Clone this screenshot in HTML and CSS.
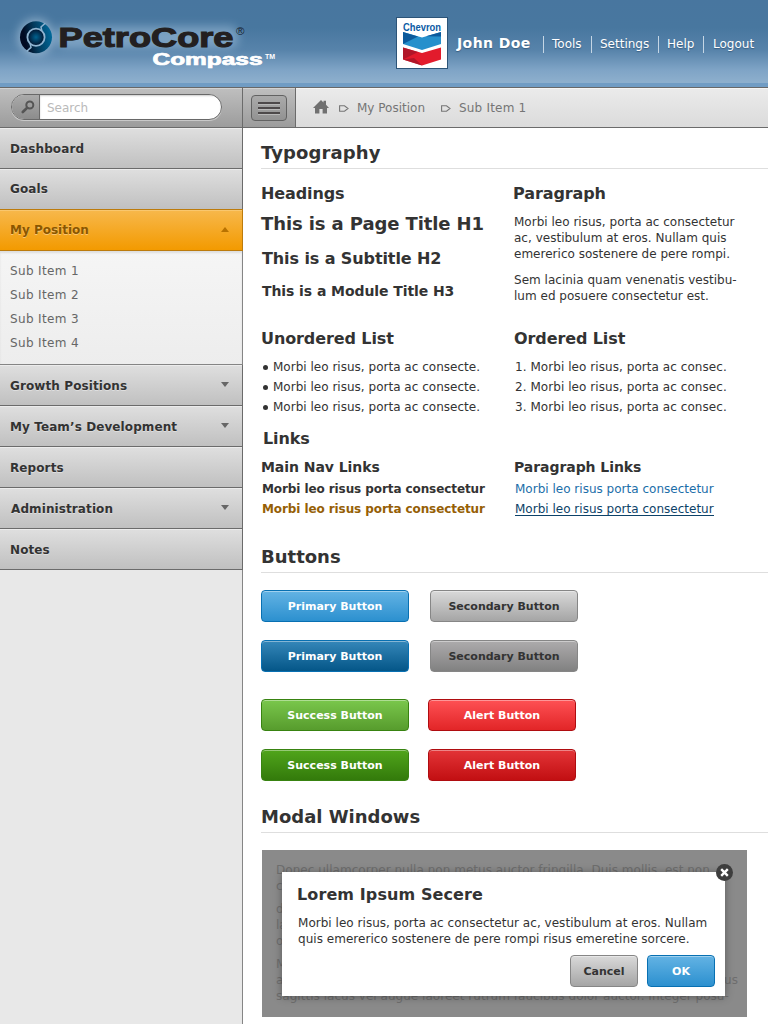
FILE: index.html
```
<!DOCTYPE html>
<html lang="en">
<head>
<meta charset="utf-8">
<title>PetroCore Compass</title>
<link rel="stylesheet" href="styles.css">
</head>
<body>
<header class="header">
  <svg class="logo" width="290" height="83" viewBox="0 0 290 83" role="img" aria-label="PetroCore Compass">
    <defs>
      <linearGradient id="ring" x1="0" x2="1" y1="0.6" y2="0.4"><stop offset="0.15" stop-color="#010a22"/><stop offset="0.5" stop-color="#033a5c"/><stop offset="1" stop-color="#006a9c"/></linearGradient>
      <radialGradient id="core"><stop offset="0" stop-color="#00628f"/><stop offset="1" stop-color="#02122c"/></radialGradient>
      <filter id="glow" x="-30%" y="-60%" width="160%" height="220%"><feGaussianBlur stdDeviation="5"/></filter>
    </defs>
    <g filter="url(#glow)" opacity="0.5">
      <circle cx="36" cy="37" r="18" fill="#cfe2f2"/>
      <rect x="56" y="26" width="182" height="22" rx="8" fill="#a9c6e0"/>
    </g>
    <circle cx="36" cy="37.2" r="16" fill="url(#ring)"/>
    <circle cx="36" cy="37.2" r="8.6" fill="url(#core)" stroke="#8fb4d1" stroke-width="1.8"/>
    <path d="M41.8 30.6L41 27L45.2 23.2M30.2 43.8L31 47.4L26.8 51.2" fill="none" stroke="#8fb4d1" stroke-width="1.5"/>
    <text x="58.5" y="47" class="logo-name" textLength="175" lengthAdjust="spacingAndGlyphs">PetroCore</text>
    <text x="236" y="35" class="logo-reg">®</text>
    <text x="152.5" y="65" class="logo-sub" textLength="110" lengthAdjust="spacingAndGlyphs">Compass</text>
    <text x="265" y="59" class="logo-tm">TM</text>
  </svg>
  <div class="account">
    <svg class="company" width="52" height="52" viewBox="0 0 52 52" role="img" aria-label="Chevron">
      <rect x="0.5" y="0.5" width="51" height="51" fill="#fff" stroke="#2c5478"/>
      <text x="7" y="13.6" class="company-name" textLength="38" lengthAdjust="spacingAndGlyphs">Chevron</text>
      <path d="M7 15L26 20.5L45 15V27L26 33L7 27Z" fill="#2590cc"/>
      <path d="M7 15L22 19.5L7 27ZM45 15V19.5L30 19.3Z" fill="#0c5a9c"/>
      <path d="M7 30.5L26 36L45 30.5V42.5L26 48.5L7 42.5Z" fill="#e21b2c"/>
      <path d="M7 30.5L22 35L7 42.5ZM7 42.5L18 41L26 48.5Z" fill="#a81528" opacity="0.85"/>
    </svg>
    <strong class="user">John Doe</strong>
    <nav class="links"><a>Tools</a><a>Settings</a><a>Help</a><a>Logout</a></nav>
  </div>
</header>
<div class="toolbar">
  <div class="search-area">
    <div class="search">
      <span class="search-button"><svg width="14" height="14" viewBox="0 0 14 14"><circle cx="8.8" cy="5" r="3.5" fill="none" stroke="#555" stroke-width="2"/><path d="M6.2 7.8L1.8 12" stroke="#555" stroke-width="2.6" stroke-linecap="round"/></svg></span>
      <span class="search-field">Search</span>
    </div>
  </div>
  <div class="toggle-area"><span class="toggle"><i></i><i></i><i></i></span></div>
  <nav class="crumbs">
    <svg class="home" width="16" height="14" viewBox="0 0 16 14"><path d="M8 0L10.5 2.4V0.8H13V4.8L16 8H14V13.5H9.6V9H6.4V13.5H2V8H0Z" fill="#707070"/></svg>
    <svg class="sep" width="10" height="7" viewBox="0 0 10 7"><path d="M0.6 0.8H5.5L9 3.5L5.5 6.2H0.6Z" fill="none" stroke="#757575" stroke-width="1.1"/></svg>
    <a class="crumb">My Position</a>
    <svg class="sep" width="10" height="7" viewBox="0 0 10 7"><path d="M0.6 0.8H5.5L9 3.5L5.5 6.2H0.6Z" fill="none" stroke="#757575" stroke-width="1.1"/></svg>
    <a class="crumb last">Sub Item 1</a>
  </nav>
</div>
<div class="body">
  <aside class="sidebar">
    <a class="item">Dashboard</a>
    <a class="item goals">Goals</a>
    <a class="item active">My Position<i class="arrow up"></i></a>
    <div class="subnav"><a>Sub Item 1</a><a>Sub Item 2</a><a>Sub Item 3</a><a>Sub Item 4</a></div>
    <a class="item">Growth Positions<i class="arrow"></i></a>
    <a class="item">My Team’s Development<i class="arrow"></i></a>
    <a class="item">Reports</a>
    <a class="item admin">Administration<i class="arrow"></i></a>
    <a class="item">Notes</a>
  </aside>
  <main class="content">
    <h2 class="section">Typography</h2>
    <div class="cols headings-row">
      <div>
        <h3 class="sub">Headings</h3>
        <h1 class="t1">This is a Page Title H1</h1>
        <h2 class="t2">This is a Subtitle H2</h2>
        <h3 class="t3">This is a Module Title H3</h3>
      </div>
      <div>
        <h3 class="sub para-title">Paragraph</h3>
        <p class="para">Morbi leo risus, porta ac consectetur<br>ac, vestibulum at eros. Nullam quis<br>emererico sostenere de pere rompi.</p>
        <p class="para">Sem lacinia quam venenatis vestibu-<br>lum ed posuere consectetur est.</p>
      </div>
    </div>
    <div class="cols lists-row">
      <div>
        <h3 class="sub">Unordered List</h3>
        <ul class="list"><li><b class="dot"></b>Morbi leo risus, porta ac consecte.</li><li><b class="dot"></b>Morbi leo risus, porta ac consecte.</li><li><b class="dot"></b>Morbi leo risus, porta ac consecte.</li></ul>
      </div>
      <div>
        <h3 class="sub">Ordered List</h3>
        <ul class="list numbers"><li>1. Morbi leo risus, porta ac consec.</li><li>2. Morbi leo risus, porta ac consec.</li><li>3. Morbi leo risus, porta ac consec.</li></ul>
      </div>
    </div>
    <h3 class="sub links-title">Links</h3>
    <div class="cols links-row">
      <div>
        <h4 class="minor">Main Nav Links</h4>
        <a class="nav-link">Morbi leo risus porta consectetur</a>
        <a class="nav-link hover">Morbi leo risus porta consectetur</a>
      </div>
      <div>
        <h4 class="minor">Paragraph Links</h4>
        <a class="text-link">Morbi leo risus porta consectetur</a>
        <a class="text-link hover">Morbi leo risus porta consectetur</a>
      </div>
    </div>
    <h2 class="section buttons-title">Buttons</h2>
    <div class="buttons">
      <div class="brow"><button class="btn primary">Primary Button</button><button class="btn secondary">Secondary Button</button></div>
      <div class="brow"><button class="btn primary pressed">Primary Button</button><button class="btn secondary pressed">Secondary Button</button></div>
      <div class="brow tight"><button class="btn success">Success Button</button><button class="btn alert">Alert Button</button></div>
      <div class="brow tight"><button class="btn success pressed">Success Button</button><button class="btn alert pressed">Alert Button</button></div>
    </div>
    <h2 class="section modal-title">Modal Windows</h2>
    <div class="stage">
      <div class="backdrop">
        <p>Donec ullamcorper nulla non metus auctor fringilla. Duis mollis, est non<br>c</p>
        <p>d<br>la<br>o</p>
        <p>M<br><span class="edge"><span>a</span><span>us</span></span>sagittis lacus vel augue laoreet rutrum faucibus dolor auctor. Integer posu-</p>
      </div>
      <div class="dialog">
        <svg class="close" width="17" height="17" viewBox="0 0 17 17"><circle cx="8.5" cy="8.5" r="8.5" fill="#3e3e3e"/><path d="M5.2 5.2L11.8 11.8M11.8 5.2L5.2 11.8" stroke="#fff" stroke-width="2.4"/></svg>
        <h3 class="dialog-title">Lorem Ipsum Secere</h3>
        <p class="dialog-text">Morbi leo risus, porta ac consectetur ac, vestibulum at eros. Nullam<br>quis emererico sostenere de pere rompi risus emeretine sorcere.</p>
        <div class="actions"><button class="btn secondary">Cancel</button><button class="btn primary">OK</button></div>
      </div>
    </div>
  </main>
</div>
</body>
</html>
```
FILE: styles.css
```
* { box-sizing: border-box; margin: 0; padding: 0; }
body { width: 768px; height: 1024px; overflow: hidden; background: #fff; color: #333; font: 12px/16px Verdana, "DejaVu Sans", sans-serif; white-space: nowrap; }
.header { height: 88px; display: flex; justify-content: space-between; background: linear-gradient(#48769f 0, #48779f 28px, #5783aa 50px, #7fa4c6 70px, #8dafcd 82px, #8dafcd 83px, #709cc4 83px); border-bottom: 1px solid #686868; }
.logo { flex: none; }
.logo text { font-family: "Liberation Sans", Arial, sans-serif; }
.logo .logo-name { font-size: 27px; font-weight: 700; fill: #231f20; stroke: #231f20; stroke-width: 1.1px; }
.logo .logo-reg { font-size: 11.5px; fill: #16202c; }
.logo .logo-sub { font-size: 16px; font-weight: 700; fill: #fff; stroke: #fff; stroke-width: 0.7px; }
.logo .logo-tm { font-size: 7px; font-weight: 700; fill: #fff; }
.account { display: flex; color: #fff; width: 372px; }
.company { margin-top: 17px; flex: none; }
.company-name { font: 700 11px "Liberation Sans", Arial, sans-serif; fill: #0b5ba5; }
.user { margin: 33px 0 0 9px; width: 86px; font-size: 14px; line-height: 20px; letter-spacing: .4px; text-shadow: 0 1px 1px rgba(30,60,90,.5); }
.links { display: flex; margin-top: 36px; height: 17px; text-shadow: 0 1px 1px rgba(30,60,90,.5); }
.links a { border-left: 1px solid #c5d6e5; padding-left: 8px; line-height: 16px; }
.links a:nth-child(1) { width: 48px; }
.links a:nth-child(2) { width: 67px; }
.links a:nth-child(3) { width: 45px; }
.links a:nth-child(4) { padding-left: 9px; }
.toolbar { height: 40px; display: flex; border-bottom: 1px solid #6b6b6b; background: linear-gradient(#ebebeb, #dbdbdb); box-shadow: inset 0 1px #f5f5f5; }
.search-area { width: 243px; border-right: 1px solid #6b6b6b; padding: 6px 0 0 11px; background: linear-gradient(#bfbfbf, #9c9c9c); box-shadow: inset 0 1px #d2d2d2; }
.search { width: 211px; height: 26px; border: 1px solid #686868; border-radius: 13px; display: flex; overflow: hidden; background: #fff; box-shadow: 0 1px #c9c9c9; }
.search-button { width: 28px; border-right: 1px solid #686868; background: linear-gradient(#aaa, #8c8c8c); padding: 5px 0 0 9px; }
.search-field { padding-left: 7px; line-height: 26px; color: #bababa; flex: 1; box-shadow: inset 0 1px 2px #ccc; }
.toggle-area { width: 53px; border-right: 1px solid #6b6b6b; padding: 7px 0 0 8px; background: linear-gradient(#bfbfbf, #9c9c9c); box-shadow: inset 0 1px #d2d2d2; }
.toggle { display: flex; flex-direction: column; gap: 3px; width: 36px; height: 26px; border: 1px solid #626262; border-radius: 4px; padding: 6px 6px 0; background: linear-gradient(#aaa, #929292); }
.toggle i { height: 2px; background: #4d494a; box-shadow: 0 1px #b8b8b8; }
.crumbs { display: flex; align-items: center; flex: 1; padding: 0 0 0 17px; color: #757575; }
.home { margin: 0 10px 1px 0; }
.sep { margin: 1px 8px 0 0; }
.crumb { width: 84px; }
.crumb.last { letter-spacing: .2px; }
.body { display: flex; height: 896px; }
.sidebar { width: 243px; flex: none; background: #e8e8e8; border-right: 1px solid #858585; }
.item { display: flex; align-items: center; justify-content: space-between; width: 243px; height: 41px; padding: 1px 13px 0 10px; border-bottom: 1px solid #6b6b6b; border-right: 1px solid #6b6b6b; background: linear-gradient(#dfdfdf, #c0c0c0); box-shadow: inset 0 1px #ececec; color: #333; font-weight: 700; letter-spacing: .1px; text-shadow: 0 1px rgba(255,255,255,.4); }
.item.goals { height: 40px; border-bottom: 0; padding: 0 13px 1px 10px; }
.item.active { height: 42px; border: 1px solid #bc7b0c; border-left: 0; padding: 0 13px 0 10px; background: linear-gradient(#f7b84c, #f39a00); box-shadow: inset 0 1px #f9c76e; color: #8a5600; letter-spacing: 0; }
.item.admin { padding-left: 11px; }
.arrow { margin-top: -2px; border: 4px solid transparent; border-top: 5px solid #666; border-bottom: 0; }
.arrow.up { margin-top: -1px; border-top: 0; border-bottom: 5px solid #b87200; }
.subnav { height: 114px; padding-top: 8px; border-bottom: 1px solid #858585; background: linear-gradient(#f5f5f5, #ededed); box-shadow: inset 0 2px 2px #dedede; color: #666; letter-spacing: .35px; }
.subnav a { display: block; height: 24px; line-height: 24px; padding-left: 10px; }
.content { flex: 1; padding-left: 18px; }
.section { height: 41px; line-height: 49px; font-size: 18px; border-bottom: 1px solid #dedede; letter-spacing: .1px; }
.cols { display: grid; grid-template-columns: 253px 1fr; }
.sub { font-size: 16px; line-height: 20px; letter-spacing: -.1px; }
.headings-row { padding-top: 15px; height: 160px; }
.t1 { font-size: 18px; line-height: 24px; margin-top: 8px; letter-spacing: -.1px; }
.t2 { font-size: 16px; line-height: 20px; margin: 13px 0 0 1px; letter-spacing: -.1px; }
.t3 { font-size: 14px; line-height: 20px; margin: 12px 0 0 1px; letter-spacing: -.08px; }
.para { margin-top: 10px; letter-spacing: .015px; }
.para-title { margin: 0 0 10px -1px; }
.lists-row { height: 100px; }
.list { list-style: none; margin-top: 8px; line-height: 20px; }
.list li { display: flex; align-items: center; padding-left: 1px; letter-spacing: .015px; }
.numbers li { letter-spacing: .06px; }
.dot { width: 5px; height: 5px; border-radius: 50%; background: #333; margin: 0 5.4px 0 .6px; }
.links-title { margin-left: 2px; }
.minor { font-size: 14px; line-height: 20px; margin-bottom: 2px; letter-spacing: -.06px; }
.links-row { padding-top: 8px; height: 83px; }
.nav-link, .text-link { display: block; width: max-content; line-height: 20px; margin-left: 1px; font-weight: 700; color: #333; letter-spacing: -.09px; }
.nav-link.hover { color: #965f06; }
.text-link { font-weight: 400; color: #1c6ea9; letter-spacing: .01px; }
.text-link.hover { color: #0d4268; height: 15px; line-height: 16px; margin-top: 2px; border-bottom: 1px solid #0d4268; }
.buttons { padding-top: 17px; height: 227px; }
.brow { display: flex; gap: 21px; margin-bottom: 18px; }
.brow.tight { gap: 19px; }
.brow:nth-child(2) { margin-bottom: 27px; }
.btn { width: 148px; height: 32px; border-radius: 4px; border: 1px solid; font: 700 11px/16px Verdana, "DejaVu Sans", sans-serif; padding-top: 1px; box-shadow: inset 0 1px rgba(255,255,255,.4); }
.primary { border-color: #0870b2; background: linear-gradient(#63b3e4, #2c90cf); color: #fff; }
.primary.pressed { background: linear-gradient(#3587b9, #045688); }
.secondary { border-color: #868686; background: linear-gradient(#d9d9d9, #a5a5a5); color: #333; }
.secondary.pressed { background: linear-gradient(#adabac, #818181); }
.success { border-color: #388311; background: linear-gradient(#7ac74c, #579c2d); color: #fff; }
.success.pressed { background: linear-gradient(#50a51b, #337a0b); }
.alert { border-color: #af0c10; background: linear-gradient(#fe5154, #e22527); color: #fff; }
.alert.pressed { background: linear-gradient(#e33437, #c20f12); }
.buttons-title { line-height: 49px; letter-spacing: 0; }
.modal-title { height: 33px; line-height: 33px; letter-spacing: 0; }
.stage { position: relative; margin: 17px 0 0 1px; width: 485px; height: 167px; background: #8a8a8a; padding: 12px 0 0 14px; overflow: hidden; }
.backdrop { color: #6e6e6e; letter-spacing: .03px; }
.backdrop p { margin-bottom: 7px; }
.edge { display: flex; justify-content: space-between; width: 462px; }
.dialog { position: absolute; left: 20px; top: 22px; width: 443px; height: 124px; background: #fff; box-shadow: 0 1px 8px rgba(0,0,0,.35); padding: 13px 10px 0 15px; }
.close { position: absolute; right: -8px; top: -8px; }
.dialog-title { font-size: 16px; line-height: 20px; letter-spacing: .1px; }
.dialog-text { margin: 10px 0 0 1px; letter-spacing: .03px; }
.actions { display: flex; justify-content: flex-end; gap: 9px; margin-top: 8px; }
.actions .btn { width: 68px; }
```
